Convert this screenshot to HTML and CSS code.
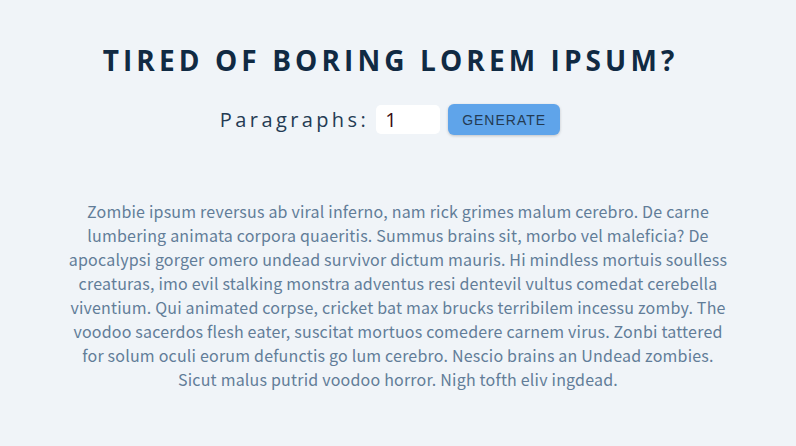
FILE: index.html
```html
<!DOCTYPE html>
<html>
<head>
<meta charset="utf-8">
<link rel="stylesheet" href="styles.css">
</head>
<body>
<section class="page">
  <h1 class="title">Tired of boring lorem ipsum?</h1>
  <form class="form">
    <label class="label" for="amount">Paragraphs:</label>
    <input class="amount" id="amount" type="number" value="1">
    <button class="btn" type="button">Generate</button>
  </form>
  <article class="text">
    <p>Zombie ipsum reversus ab viral inferno, nam rick grimes malum cerebro. De carne lumbering animata corpora quaeritis. Summus brains sit, morbo vel maleficia? De apocalypsi gorger omero undead survivor dictum mauris. Hi mindless mortuis soulless creaturas, imo evil stalking monstra adventus resi dentevil vultus comedat cerebella viventium. Qui animated corpse, cricket bat max brucks terribilem incessu zomby. The voodoo sacerdos flesh eater, suscitat mortuos comedere carnem virus. Zonbi tattered for solum oculi eorum defunctis go lum cerebro. Nescio brains an Undead zombies. Sicut malus putrid voodoo horror. Nigh tofth eliv ingdead.</p>
  </article>
</section>
</body>
</html>
```
FILE: styles.css
```css
html, body {
  margin: 0;
  padding: 0;
  background: #f0f4f8;
}
body {
  font-family: "Noto Sans CJK KR", "Noto Sans", sans-serif;
  color: #102a43;
}
.page {
  width: 660px;
  margin: 0 auto;
  padding-top: 40px;
  text-align: center;
}
.title {
  margin: 0;
  padding-right: 15px;
  font-family: "Open Sans", "Noto Sans", sans-serif;
  font-size: 28px;
  font-weight: 700;
  letter-spacing: 4.1px;
  text-transform: uppercase;
  color: #102a43;
  line-height: 40px;
}
.form {
  margin-top: 24px;
  display: flex;
  justify-content: center;
  align-items: center;
}
.label {
  font-family: "Open Sans", "Noto Sans", sans-serif;
  font-size: 20px;
  letter-spacing: 3.4px;
  color: #243b53;
  margin-right: 7px;
}
.amount {
  width: 64px;
  height: 29px;
  box-sizing: border-box;
  border: none;
  border-radius: 5px;
  background: #fff;
  padding: 0 9px;
  font-size: 20px;
  font-family: "Open Sans", sans-serif;
  color: #3a0d14;
  -moz-appearance: textfield;
}
.amount::-webkit-inner-spin-button, .amount::-webkit-outer-spin-button {
  -webkit-appearance: none;
  margin: 0;
}
.btn {
  margin-left: 8px;
  margin-right: 16px;
  width: 112px;
  height: 31px;
  border: none;
  border-radius: 6px;
  background: #5fa4ea;
  color: #243b53;
  font-family: "Liberation Sans", Arial, sans-serif;
  font-size: 14px;
  letter-spacing: 1px;
  text-transform: uppercase;
  box-shadow: 0 1px 3px rgba(0,0,0,0.2);
}
.text {
  margin-top: 64px;
}
.text p {
  margin: 0;
  font-size: 16px;
  line-height: 24px;
  letter-spacing: 0.2px;
  color: #627d98;
}
```
